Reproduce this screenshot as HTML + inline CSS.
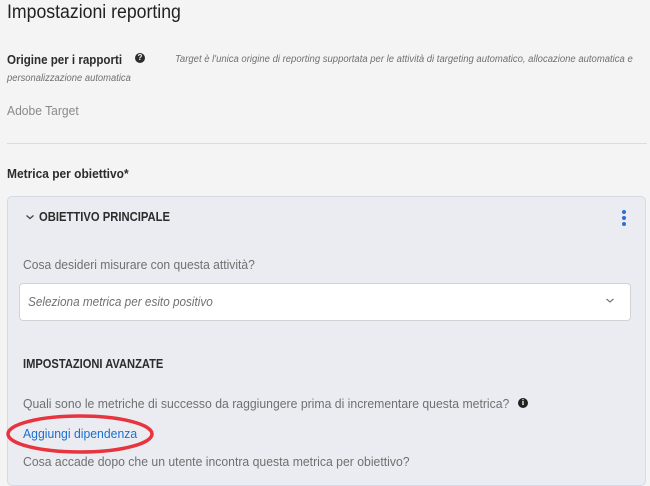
<!DOCTYPE html>
<html><head><meta charset="utf-8"><style>
*{margin:0;padding:0;box-sizing:border-box}
body{width:650px;height:472px;overflow:hidden;background:#f4f4f4;font-family:"Liberation Sans",sans-serif;position:relative;color:#2c2c2c}
.t{position:absolute;white-space:nowrap;transform-origin:0 0;line-height:1}
.panel{position:absolute;left:7px;top:196px;width:639px;height:290px;background:#eaecf1;border:1px solid #d5dbe5;border-radius:5px}
.sel{position:absolute;left:19px;top:283px;width:612px;height:38px;background:#fff;border:1px solid #d3d3d3;border-radius:4px}
</style></head><body>
<div class="t" style="left:7px;top:3px;font-size:19px;color:#222;transform:scaleX(.93)">Impostazioni reporting</div>
<div class="t" style="left:7px;top:53px;font-size:13px;font-weight:bold;transform:scaleX(.89)">Origine per i rapporti</div>
<div style="position:absolute;left:135px;top:53px;width:10px;height:10px;border-radius:50%;background:#2c2c2c;color:#fff;font:bold 8px 'Liberation Sans',sans-serif;text-align:center;line-height:10px">?</div>
<div class="t" style="left:175px;top:55px;font-size:10px;font-style:italic;color:#707070;transform:scaleX(.95)">Target è l'unica origine di reporting supportata per le attività di targeting automatico, allocazione automatica e</div>
<div class="t" style="left:7px;top:74px;font-size:10px;font-style:italic;color:#707070;transform:scaleX(.94)">personalizzazione automatica</div>
<div class="t" style="left:7px;top:104px;font-size:13px;color:#8a8a8a;transform:scaleX(.93)">Adobe Target</div>
<div style="position:absolute;left:7px;top:143px;width:640px;height:1px;background:#dcdcdc"></div>
<div class="t" style="left:7px;top:167px;font-size:13px;font-weight:bold;transform:scaleX(.92)">Metrica per obiettivo*</div>
<div class="panel"></div>
<svg style="position:absolute;left:25px;top:213px" width="10" height="8"><path d="M1.5 2.5 L5 5.5 L8.5 2.5" fill="none" stroke="#444" stroke-width="1.3"/></svg>
<div class="t" style="left:39px;top:211px;font-size:12.5px;font-weight:bold;transform:scaleX(.90)">OBIETTIVO PRINCIPALE</div>
<div style="position:absolute;left:622px;top:210px;width:4px;height:4px;border-radius:50%;background:#2d6fd6"></div>
<div style="position:absolute;left:622px;top:216px;width:4px;height:4px;border-radius:50%;background:#2d6fd6"></div>
<div style="position:absolute;left:622px;top:222px;width:4px;height:4px;border-radius:50%;background:#2d6fd6"></div>
<div class="t" style="left:23px;top:258px;font-size:13px;color:#707070;transform:scaleX(.93)">Cosa desideri misurare con questa attività?</div>
<div class="sel"></div>
<div class="t" style="left:28px;top:296px;font-size:12.5px;font-style:italic;color:#707070;transform:scaleX(.94)">Seleziona metrica per esito positivo</div>
<svg style="position:absolute;left:605px;top:297px" width="10" height="8"><path d="M1.5 2 L5 5 L8.5 2" fill="none" stroke="#777" stroke-width="1.2"/></svg>
<div class="t" style="left:23px;top:358px;font-size:12.5px;font-weight:bold;transform:scaleX(.89)">IMPOSTAZIONI AVANZATE</div>
<div class="t" style="left:23px;top:397px;font-size:13px;color:#707070;transform:scaleX(.94)">Quali sono le metriche di successo da raggiungere prima di incrementare questa metrica?</div>
<div style="position:absolute;left:518px;top:398px;width:10px;height:10px;border-radius:50%;background:#222;color:#fff;font:bold 8px 'Liberation Serif',serif;text-align:center;line-height:10px">i</div>
<div class="t" style="left:23px;top:427px;font-size:13px;color:#1b6fd1;transform:scaleX(.94)">Aggiungi dipendenza</div>
<svg style="position:absolute;left:0;top:410px" width="165" height="52"><ellipse cx="80" cy="24" rx="72" ry="18" fill="none" stroke="#e8343e" stroke-width="3.5"/></svg>
<div class="t" style="left:23px;top:455px;font-size:13px;color:#707070;transform:scaleX(.94)">Cosa accade dopo che un utente incontra questa metrica per obiettivo?</div>
</body></html>
